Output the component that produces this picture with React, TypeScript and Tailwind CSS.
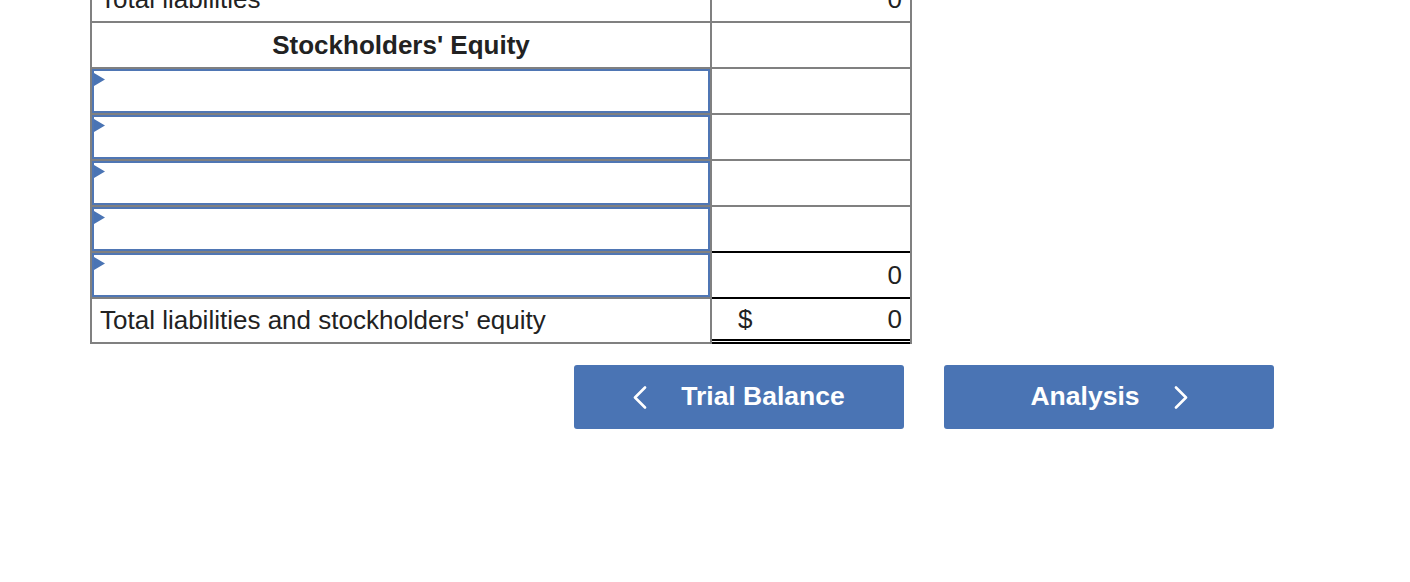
import type { ReactNode } from "react";

const font = { fontFamily: '"Liberation Sans", Arial, sans-serif' };

function Marker() {
  return (
    <svg
      className="absolute left-0 top-[2px]"
      width="11"
      height="13"
      viewBox="0 0 11 13"
    >
      <polygon points="0,0 11,6.5 0,13" fill="#4a74b4" />
    </svg>
  );
}

function InputRow({ right }: { right?: ReactNode }) {
  return (
    <div className="flex">
      <div className="w-[620px] border-l-2 border-t-2 border-[#808080]">
        <div className="relative h-[44px] border-2 border-[#4f76b4] bg-white">
          <Marker />
        </div>
      </div>
      {right ?? (
        <div className="h-[46px] w-[202px] border-x-2 border-t-2 border-[#808080]" />
      )}
    </div>
  );
}

function Chevron({ dir }: { dir: "left" | "right" }) {
  return (
    <svg width="14" height="23" viewBox="0 0 14 23" fill="none">
      <polyline
        points={dir === "left" ? "12,1.5 2,11.5 12,21.5" : "2,1.5 12,11.5 2,21.5"}
        stroke="white"
        strokeWidth="2.6"
        strokeLinecap="round"
        strokeLinejoin="round"
      />
    </svg>
  );
}

export default function App() {
  return (
    <div className="h-[582px] w-[1410px] overflow-hidden bg-white text-[#222]" style={font}>
      <div className="-mt-[25px] ml-[90px] w-[822px]">
        {/* Total liabilities (partly scrolled off) */}
        <div className="flex">
          <div className="flex h-[46px] w-[620px] items-center border-l-2 border-t-2 border-[#808080] pl-[8px] text-[26px]">
            Total liabilities
          </div>
          <div className="flex h-[46px] w-[202px] items-center justify-end border-x-2 border-t-2 border-[#808080] pr-[8px] text-[26px]">
            0
          </div>
        </div>

        {/* section header */}
        <div className="flex">
          <div className="flex h-[46px] w-[620px] items-center justify-center border-l-2 border-t-2 border-[#808080] text-[26px] font-bold">
            Stockholders' Equity
          </div>
          <div className="h-[46px] w-[202px] border-x-2 border-t-2 border-[#808080]" />
        </div>

        <InputRow />
        <InputRow />
        <InputRow />
        <InputRow />
        <InputRow
          right={
            <div className="h-[46px] w-[202px] border-x-2 border-[#808080]">
              <div className="flex h-full items-center justify-end border-t-2 border-black pr-[8px] text-[26px]">
                0
              </div>
            </div>
          }
        />

        {/* total */}
        <div className="flex">
          <div className="flex h-[47px] w-[620px] items-center border-y-2 border-l-2 border-[#808080] pl-[8px] text-[26px]">
            Total liabilities and stockholders' equity
          </div>
          <div className="h-[47px] w-[202px] border-x-2 border-[#808080]">
            <div className="flex h-full items-center justify-between border-b-[5px] border-t-2 border-double border-black pl-[26px] pr-[8px] text-[26px]">
              <span>$</span>
              <span>0</span>
            </div>
          </div>
        </div>
      </div>

      {/* navigation */}
      <div className="ml-[574px] mt-[21px] flex gap-[40px]">
        <button className="flex h-[64px] w-[330px] items-center justify-center gap-[34px] rounded-[3px] bg-[#4a74b4] text-[26.5px] font-bold text-white">
          <Chevron dir="left" />
          <span>Trial Balance</span>
        </button>
        <button className="flex h-[64px] w-[330px] items-center justify-center gap-[34px] rounded-[3px] bg-[#4a74b4] text-[26.5px] font-bold text-white">
          <span>Analysis</span>
          <Chevron dir="right" />
        </button>
      </div>
    </div>
  );
}
